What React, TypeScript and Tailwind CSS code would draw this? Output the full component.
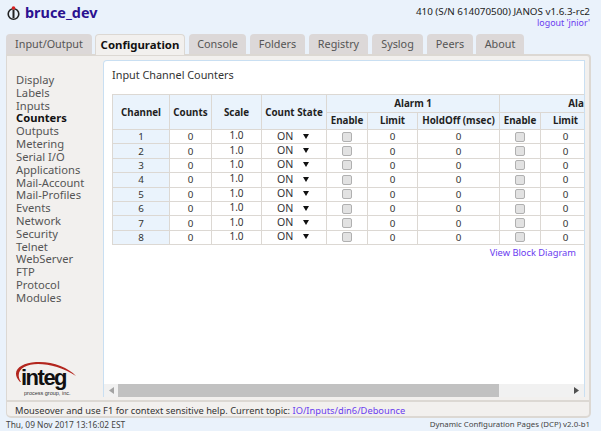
import React from "react";

const tabs = [
  { t: "Input/Output", c: "w-[86px]" },
  { t: "Configuration", c: "-ml-[1px] w-[90px]" },
  { t: "Console", c: "w-[57px]" },
  { t: "Folders", c: "w-[55px]" },
  { t: "Registry", c: "w-[59px]" },
  { t: "Syslog", c: "w-[51px]" },
  { t: "Peers", c: "w-[46px]" },
  { t: "About", c: "-ml-[1px] w-[48px]" },
];
const nav = ["Display", "Labels", "Inputs", "Counters", "Outputs", "Metering", "Serial I/O", "Applications", "Mail-Account", "Mail-Profiles", "Events", "Network", "Security", "Telnet", "WebServer", "FTP", "Protocol", "Modules"];
const rows = [1, 2, 3, 4, 5, 6, 7, 8];
const cell = "border border-[#dcd8d3] p-0 text-center align-middle";
const head = "border border-[#dcd8d3] p-0 text-center align-middle bg-[#eaf3fc] font-bold text-[#1f1f1f]";

function Check() {
  return <span className="mx-auto block h-[10px] w-[10px] rounded-[2px] border border-[#b0b0b0] bg-[#e2e2e2]" />;
}

function Logo() {
  return (
    <svg width="66" height="36" viewBox="0 0 66 36" className="block">
      <path d="M8 21 C-2 10 8 2 24 1 C40 0 56 6 64 15 C52 7 38 3 26 3 C12 3 2 10 9 21 Z" fill="#b3261e" />
      <text x="9" y="24" fontFamily="'Liberation Sans', sans-serif" fontWeight="700" fontSize="22" letterSpacing="-1.5" fill="#111">integ</text>
      <text x="12" y="34" fontFamily="'Liberation Sans', sans-serif" fontSize="5.5" fill="#333">process group, inc.</text>
    </svg>
  );
}

export default function App() {
  return (
    <div className="flex h-[431px] w-[601px] flex-col overflow-hidden bg-[#eaf2fb] [font-family:'DejaVu_Sans',sans-serif] text-[10.8px] text-[#333]">
      <header className="flex h-[34px] shrink-0 items-start justify-between pl-[7px] pr-[11px]">
        <div className="flex items-center gap-[5px] pt-[4px]">
          <svg width="13" height="16" viewBox="0 0 13 16" className="block">
            <circle cx="6.5" cy="9" r="5.3" fill="none" stroke="#222" strokeWidth="1.6" />
            <rect x="5.5" y="5" width="2" height="8" fill="#222" />
            <circle cx="6.5" cy="3" r="1.8" fill="#d92020" />
          </svg>
          <span className="text-[14.4px] leading-[18px] font-bold text-[#2b1190]">bruce_dev</span>
        </div>
        <div className="pt-[6px] text-right text-[9.84px] leading-[11px] text-[#222]">
          <div>410 (S/N 614070500) JANOS v1.6.3-rc2</div>
          <div className="text-[8.9px] text-[#6a3cf0]">logout 'jnior'</div>
        </div>
      </header>

      <nav className="relative z-10 flex h-[20px] shrink-0 items-end gap-[4px] pl-[6px]">
        {tabs.map(({ t, c }) =>
          t === "Configuration" ? (
            <div key={t} className={`${c} -mb-[1px] flex h-[21px] items-center justify-center rounded-t-[4px] border border-b-0 border-[#dcd8d3] bg-[#f2f0ee] text-[11.4px] font-bold text-[#111]`}>{t}</div>
          ) : (
            <div key={t} className={`${c} flex h-[20px] items-center justify-center rounded-t-[4px] bg-[#dcd8d8] text-[#555]`}>{t}</div>
          )
        )}
      </nav>

      <main className="ml-[6px] mr-[10px] flex h-[364px] shrink-0 flex-col rounded-b-[5px] rounded-tr-[4px] border-2 border-l-[1px] border-[#dcd8d3] bg-[#f2f0ee]">
        <div className="flex min-h-0 flex-1 border-b-2 border-[#dcd8d3] pt-[4px]">
          <aside className="flex w-[96px] shrink-0 flex-col justify-between pb-[3px] pl-[9px]">
            <ul className="mt-[14px] text-[11.2px] leading-[12.82px] text-[#555]">
              {nav.map((n) => (
                <li key={n} className={n === "Counters" ? "font-bold text-[#111]" : ""}>{n}</li>
              ))}
            </ul>
            <div className="-ml-[4px]"><Logo /></div>
          </aside>
          <section className="mb-[3px] mr-[4px] flex min-w-0 flex-1 flex-col overflow-hidden rounded-tl-[4px] border-l border-t border-r border-[#c9dff2] bg-white">
            <div className="flex-1 overflow-hidden pl-[8px]">
              <h1 className="pt-[7px] text-[10.85px] leading-[13px] font-normal text-[#333]">Input Channel Counters</h1>
              <table className="mt-[13px] w-[562px] table-fixed border-collapse text-[9.8px] leading-[11px]">
                <colgroup>
                  <col className="w-[57px]" /><col className="w-[42px]" /><col className="w-[50px]" /><col className="w-[65px]" />
                  <col className="w-[41px]" /><col className="w-[50px]" /><col className="w-[82px]" />
                  <col className="w-[41px]" /><col className="w-[50px]" /><col className="w-[84px]" />
                </colgroup>
                <thead>
                  <tr className="h-[17.5px]">
                    <th rowSpan={2} className={head}>Channel</th>
                    <th rowSpan={2} className={head}>Counts</th>
                    <th rowSpan={2} className={head}>Scale</th>
                    <th rowSpan={2} className={head}>Count State</th>
                    <th colSpan={3} className={head}>Alarm 1</th>
                    <th colSpan={3} className={head}>Alarm 2</th>
                  </tr>
                  <tr className="h-[17.5px]">
                    {["Enable", "Limit", "HoldOff (msec)", "Enable", "Limit", "HoldOff (msec)"].map((h, i) => (
                      <th key={i} className={head}>{h}</th>
                    ))}
                  </tr>
                </thead>
                <tbody>
                  {rows.map((r) => (
                    <tr key={r} className="h-[14.4px]">
                      <td className={`${cell} bg-[#eaf3fc]`}>{r}</td>
                      <td className={cell}>0</td>
                      <td className={`${cell} pb-[2px] text-[10px]`}>1.0</td>
                      <td className={`${cell} pb-[1px] text-[10.6px]`}>
                        <div className="flex h-[11px] items-center pl-[15px]">
                          <span>ON</span>
                          <svg width="6" height="5" viewBox="0 0 6 5" className="ml-[10px] block"><path d="M0 0H6L3 5Z" fill="#111" /></svg>
                        </div>
                      </td>
                      <td className={cell}><Check /></td>
                      <td className={cell}>0</td>
                      <td className={cell}>0</td>
                      <td className={cell}><Check /></td>
                      <td className={cell}>0</td>
                      <td className={cell}>0</td>
                    </tr>
                  ))}
                </tbody>
              </table>
              <div className="mt-[2px] w-[464px] text-right text-[9.3px] leading-[12px] text-[#6a3cf0]">View Block Diagram</div>
            </div>
            <div className="flex h-[13px] shrink-0 items-stretch bg-[#f1f1f1]">
              <div className="flex w-[14px] items-center justify-center">
                <svg width="5" height="7" viewBox="0 0 5 7"><path d="M5 0V7L0 3.5Z" fill="#a3a3a3" /></svg>
              </div>
              <div className="w-[381px] bg-[#c1c1c1]" />
              <div className="flex flex-1 items-center justify-end pr-[5px]">
                <svg width="5" height="7" viewBox="0 0 5 7"><path d="M0 0V7L5 3.5Z" fill="#505050" /></svg>
              </div>
            </div>
          </section>
        </div>
        <div className="flex h-[14px] shrink-0 items-center pl-[8px] pt-[3px] text-[9.3px] leading-[11px] text-[#333]">
          <span>Mouseover and use F1 for context sensitive help. Current topic:&nbsp;</span>
          <span className="text-[#6a3cf0]">IO/Inputs/din6/Debounce</span>
        </div>
      </main>

      <footer className="flex flex-1 items-center justify-between pl-[6px] pr-[11px] pt-[1px] text-[#444]">
        <span className="text-[8.35px]">Thu, 09 Nov 2017 13:16:02 EST</span>
        <span className="text-[7.85px]">Dynamic Configuration Pages (DCP) v2.0-b1</span>
      </footer>
    </div>
  );
}
